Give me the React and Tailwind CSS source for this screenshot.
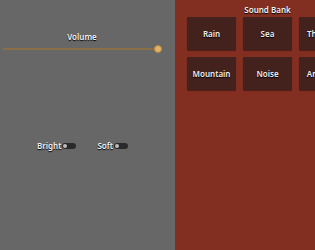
import React from 'react'

const sounds = ['Rain', 'Sea', 'Thunder', 'Mountain', 'Noise', 'Ambient']

function Toggle({ label }) {
  return (
    <div className="flex items-center gap-[1px]">
      <span className="text-[8px] font-semibold leading-[10px] text-[#f0f0f0] [text-shadow:0_1px_1px_#000]">{label}</span>
      <div className="flex h-[6px] w-[14px] items-center rounded-full bg-[#2a2a2a] px-[1px]">
        <div className="h-[4px] w-[4px] rounded-full bg-[#bdbdbd]" />
      </div>
    </div>
  )
}

export default function App(){
  return (
    <div className="flex h-[250px] w-[315px] overflow-hidden font-['Noto_Sans',sans-serif]">
      <div className="flex h-full w-[175px] shrink-0 flex-col bg-[#676767]">
        <div className="mt-[31px] flex w-[164px] flex-col items-center">
          <span className="text-[8px] font-semibold leading-[11px] text-[#f2f2f2] [text-shadow:0_1px_1px_#000]">Volume</span>
          <div className="relative mt-[3px] h-[8px] w-full">
            <div className="absolute left-[3px] right-[6px] top-[3px] h-[2px] bg-[#8a6f45]" />
            <div className="absolute left-[154px] top-0 h-[8px] w-[8px] rounded-full border border-[#b08840] bg-[#e2b267]" />
          </div>
        </div>
        <div className="mt-[88px] flex w-[165px] justify-center gap-[21px]">
          <Toggle label="Bright" />
          <Toggle label="Soft" />
        </div>
      </div>
      <div className="h-full flex-1 bg-[#822f22]">
        <div className="flex w-[185px] flex-col items-center px-[12px] pt-[4px]">
          <span className="text-[8px] font-semibold leading-[11px] text-[#f2f2f2] [text-shadow:0_1px_1px_#000]">Sound Bank</span>
          <div className="mt-[2px] grid w-full grid-cols-3 gap-[7px]">
            {sounds.map(s => (
              <div key={s} className="flex h-[33px] items-center justify-center rounded-[1px] bg-[#43211d] shadow-[0_1px_1px_rgba(0,0,0,0.4)]">
                <span className="text-[8px] font-semibold text-[#eeeeee] [text-shadow:0_1px_1px_#000]">{s}</span>
              </div>
            ))}
          </div>
        </div>
      </div>
    </div>
  )
}
